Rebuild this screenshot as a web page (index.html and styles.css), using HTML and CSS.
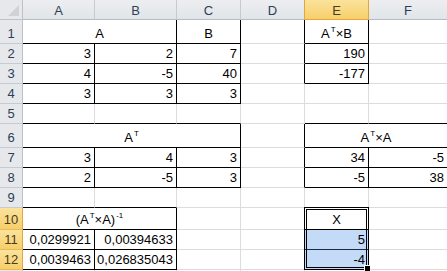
FILE: index.html
```html
<!DOCTYPE html>
<html>
<head>
<meta charset="utf-8">
<link rel="stylesheet" href="styles.css">
</head>
<body>
<div class="sheet">
  <div class="corner"></div>
  <div class="ch">A</div>
  <div class="ch">B</div>
  <div class="ch">C</div>
  <div class="ch">D</div>
  <div class="ch on">E</div>
  <div class="ch">F</div>

  <div class="rh">1</div>
  <div class="c t r b span2">A</div>
  <div class="c t r b">B</div>
  <div class="c r"></div>
  <div class="c t r b"><span>A<sup>T</sup>×B</span></div>
  <div class="c"></div>

  <div class="rh">2</div>
  <div class="c n r b">3</div>
  <div class="c n r b">2</div>
  <div class="c n r b">7</div>
  <div class="c r"></div>
  <div class="c n r b">190</div>
  <div class="c"></div>

  <div class="rh">3</div>
  <div class="c n r b">4</div>
  <div class="c n r b">-5</div>
  <div class="c n r b">40</div>
  <div class="c r"></div>
  <div class="c n r b">-177</div>
  <div class="c"></div>

  <div class="rh">4</div>
  <div class="c n r b">3</div>
  <div class="c n r b">3</div>
  <div class="c n r b">3</div>
  <div class="c"></div>
  <div class="c"></div>
  <div class="c"></div>

  <div class="rh">5</div>
  <div class="c b"></div>
  <div class="c b"></div>
  <div class="c b"></div>
  <div class="c"></div>
  <div class="c b"></div>
  <div class="c b"></div>

  <div class="rh">6</div>
  <div class="c t r b span3"><span>A<sup>T</sup></span></div>
  <div class="c r"></div>
  <div class="c t r b span2"><span>A<sup>T</sup>×A</span></div>

  <div class="rh">7</div>
  <div class="c n r b">3</div>
  <div class="c n r b">4</div>
  <div class="c n r b">3</div>
  <div class="c r"></div>
  <div class="c n r b">34</div>
  <div class="c n r b">-5</div>

  <div class="rh">8</div>
  <div class="c n r b">2</div>
  <div class="c n r b">-5</div>
  <div class="c n r b">3</div>
  <div class="c r"></div>
  <div class="c n r b">-5</div>
  <div class="c n r b">38</div>

  <div class="rh">9</div>
  <div class="c b"></div>
  <div class="c b"></div>
  <div class="c"></div>
  <div class="c"></div>
  <div class="c"></div>
  <div class="c"></div>

  <div class="rh on">10</div>
  <div class="c t r b span2"><span>(A<sup>T</sup>×A)<sup>-1</sup></span></div>
  <div class="c"></div>
  <div class="c"></div>
  <div class="c t b e10">X</div>
  <div class="c"></div>

  <div class="rh on">11</div>
  <div class="c n r b">0,0299921</div>
  <div class="c n r b">0,00394633</div>
  <div class="c"></div>
  <div class="c"></div>
  <div class="c n b sel e11">5</div>
  <div class="c"></div>

  <div class="rh on">12</div>
  <div class="c n r b">0,0039463</div>
  <div class="c n r b">0,026835043</div>
  <div class="c"></div>
  <div class="c"></div>
  <div class="c n sel e12">-4</div>
  <div class="c"></div>

  <div class="rh"></div>
  <div class="c"></div>
  <div class="c"></div>
  <div class="c"></div>
  <div class="c"></div>
  <div class="c"></div>
  <div class="c"></div>

  <div class="pick"></div>
</div>
</body>
</html>
```
FILE: styles.css
```css
html, body {
  margin: 0;
  padding: 0;
  background: #ffffff;
  overflow: hidden;
}

.sheet {
  display: grid;
  grid-template-columns: 23px 72px 82px 64px 64px 64px 79px;
  grid-template-rows: 20px 24px 20px 20px 20px 20px 24px 20px 20px 20px 22px 20px 20px 2px;
  font-family: "Liberation Sans", Arial, sans-serif;
  font-size: 13px;
  color: #000;
  width: 448px;
}

.sheet > div {
  box-sizing: border-box;
}

.corner {
  background: #e6e8eb;
  border-right: 1px solid #bcc2c9;
  border-bottom: 1px solid #bcc2c9;
  position: relative;
}
.corner::after {
  content: "";
  position: absolute;
  right: 3px;
  bottom: 3px;
  width: 0;
  height: 0;
  border-left: 11px solid transparent;
  border-bottom: 11px solid #cfd3d8;
}

.ch {
  background: linear-gradient(#eceef1, #e1e4e8);
  border-right: 1px solid #c6cbd1;
  border-bottom: 1px solid #b4bbc3;
  color: #2c3f57;
  display: flex;
  align-items: center;
  justify-content: center;
  padding-top: 1px;
}
.ch.on {
  background: linear-gradient(#fbe39c, #f6cf6a);
  border-right: 1px solid #e3a63c;
  border-bottom: 1px solid #e3a63c;
  border-left: 1px solid #e3a63c;
  margin-left: -1px;
  color: #4a3a1e;
}

.rh {
  background: #e6e8eb;
  border-right: 1px solid #bcc2c9;
  border-bottom: 1px solid #c6cbd1;
  color: #2c3f57;
  display: flex;
  align-items: flex-end;
  justify-content: center;
  padding-bottom: 2px;
}
.rh.on {
  background: linear-gradient(#fbe39c, #f6cf6a);
  border-bottom-color: #e8b85a;
  border-right-color: #e3a63c;
  color: #4a3a1e;
}

.c {
  border-right: 1px solid #dadcdd;
  border-bottom: 1px solid #dadcdd;
  display: flex;
  align-items: flex-end;
  padding: 0 3px 2px 3px;
  white-space: nowrap;
  overflow: visible;
}
.c.r { border-right-color: #000; }
.c.b { border-bottom-color: #000; }
.c.n { justify-content: flex-end; }
.c.t { justify-content: center; }
.c.sel { background: #c3dbf6; }
.c.b.sel { border-bottom-color: #1d2a44; }

.e10 { grid-column: 6; grid-row: 11; }
.e11 { grid-column: 6; grid-row: 12; }
.e12 { grid-column: 6; grid-row: 13; }

.span2 { grid-column: span 2; }
.span3 { grid-column: span 3; }

sup {
  font-size: 8px;
  line-height: 0;
  position: relative;
  top: -1px;
  vertical-align: super;
  margin-left: 1px;
}

.pick {
  grid-column: 6;
  grid-row: 11 / 14;
  margin: -1px 0 0 -1px;
  border: 3px double #000;
  position: relative;
  pointer-events: none;
}
.pick::after {
  content: "";
  position: absolute;
  right: -4px;
  bottom: -4px;
  width: 5px;
  height: 5px;
  background: #000;
  border-left: 1px solid #fff;
  border-top: 1px solid #fff;
}
```
